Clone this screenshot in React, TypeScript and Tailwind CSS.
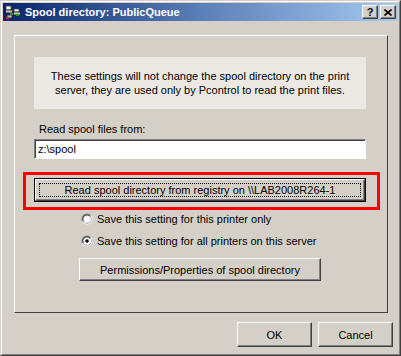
import React from "react";

const font = { fontFamily: '"Liberation Sans", Arial, sans-serif' };

function Raised({ className = "", children }: { className?: string; children?: React.ReactNode }) {
  return (
    <div
      className={`flex items-center justify-center border border-t-white border-l-white border-r-[#404040] border-b-[#404040] bg-[#d4d0c8] shadow-[inset_-1px_-1px_0_#808080] ${className}`}
    >
      {children}
    </div>
  );
}

function Radio({ checked }: { checked?: boolean }) {
  return (
    <svg width="12" height="12" viewBox="0 0 12 12" className="shrink-0">
      <circle cx="6" cy="6" r="5.5" fill="#808080" />
      <path d="M1 8.5 A5.5 5.5 0 0 0 11 8.5 A5.5 5.5 0 0 0 10 2 L6 6 Z" fill="#ffffff" />
      <circle cx="6" cy="6" r="4.5" fill="#404040" />
      <path d="M2.2 8.5 A4.5 4.5 0 0 0 10 8 A4.5 4.5 0 0 0 9.4 3 L6 6 Z" fill="#d4d0c8" />
      <circle cx="6" cy="6" r="3.6" fill="#ffffff" />
      {checked && <circle cx="6" cy="6" r="1.8" fill="#000000" />}
    </svg>
  );
}

function TitleIcon() {
  return (
    <svg width="16" height="16" viewBox="0 0 16 16" className="shrink-0">
      <rect x="1" y="2" width="5" height="4" fill="#ffffff" stroke="#404040" strokeWidth="0.8" />
      <rect x="0.5" y="6" width="7" height="3" fill="#c0c0c0" stroke="#202020" strokeWidth="0.8" />
      <rect x="9" y="5" width="5" height="3" fill="#ffffff" stroke="#404040" strokeWidth="0.8" />
      <rect x="8.5" y="8" width="7" height="3" fill="#c0c0c0" stroke="#202020" strokeWidth="0.8" />
      <rect x="2" y="11" width="5" height="3" fill="#c0c0c0" stroke="#202020" strokeWidth="0.8" />
      <rect x="1" y="13" width="3" height="2" fill="#e02020" />
      <rect x="11" y="10" width="3" height="2" fill="#20a020" />
      <rect x="5" y="9" width="3" height="2" fill="#20a020" />
    </svg>
  );
}

export default function App() {
  return (
    <div style={font} className="text-[11px] leading-[14px] text-black">
      <div className="flex h-[356px] w-[401px] border border-t-[#d4d0c8] border-l-[#d4d0c8] border-r-[#404040] border-b-[#404040] bg-[#d4d0c8]">
        <div className="flex flex-1 flex-col border border-t-white border-l-white border-r-[#808080] border-b-[#808080] p-[1px]">
          {/* Title bar */}
          <div className="flex h-[18px] items-center bg-linear-to-r from-[#0a246a] via-[#5b7fb8] via-50% to-[#a6caf0] pl-[2px] pr-[2px]">
            <TitleIcon />
            <span className="ml-[4px] text-[11px] font-bold text-white">Spool directory: PublicQueue</span>
            <div className="ml-auto flex gap-[2px]">
              <Raised className="h-[14px] w-[16px]">
                <span className="text-[11px] font-bold leading-none">?</span>
              </Raised>
              <Raised className="h-[14px] w-[16px]">
                <svg width="8" height="7" viewBox="0 0 8 7">
                  <path d="M0.5 0.5 L7.5 6.5 M7.5 0.5 L0.5 6.5" stroke="#000" strokeWidth="1.6" />
                </svg>
              </Raised>
            </div>
          </div>

          {/* Panel */}
          <div className="ml-[11px] mt-[14px] flex h-[278px] w-[374px] flex-col border border-t-white border-l-white border-r-[#404040] border-b-[#404040]">
            <div className="ml-[19px] mt-[21px] flex h-[52px] w-[332px] flex-col items-center justify-center bg-[#ece9e5] text-center">
              <span>These settings will not change the spool directory on the print</span>
              <span>server, they are used only by Pcontrol to read the print files.</span>
            </div>

            <div className="ml-[24px] mt-[13px]">Read spool files from:</div>

            <div className="ml-[19px] mt-[3px] flex h-[20px] w-[332px] items-center border border-t-[#808080] border-l-[#808080] border-r-white border-b-white bg-white pl-[3px] shadow-[inset_1px_1px_0_#404040]">
              z:\spool
            </div>

            <div className="relative ml-[19px] mt-[19px] flex h-[24px] w-[332px] border border-black">
              <div className="pointer-events-none absolute -bottom-[9px] -left-[12px] -right-[15px] -top-[7px] border-[3px] border-[#ff0000]" />
              <Raised className="flex-1 p-[3px]">
                <div className="flex h-full w-full items-center justify-center border border-dotted border-black">
                  Read spool directory from registry on \\LAB2008R264-1
                </div>
              </Raised>
            </div>

            <div className="ml-[66px] mt-[10px] flex h-[14px] items-center gap-[4px]">
              <Radio />
              <span>Save this setting for this printer only</span>
            </div>
            <div className="ml-[66px] mt-[8px] flex h-[14px] items-center gap-[4px]">
              <Radio checked />
              <span>Save this setting for all printers on this server</span>
            </div>

            <Raised className="ml-[64px] mt-[10px] h-[23px] w-[242px]">
              Permissions/Properties of spool directory
            </Raised>
          </div>

          {/* Bottom buttons */}
          <div className="mr-[5px] mt-[9px] flex justify-end gap-[6px]">
            <Raised className="h-[25px] w-[75px]">OK</Raised>
            <Raised className="h-[25px] w-[75px]">Cancel</Raised>
          </div>
        </div>
      </div>
    </div>
  );
}
